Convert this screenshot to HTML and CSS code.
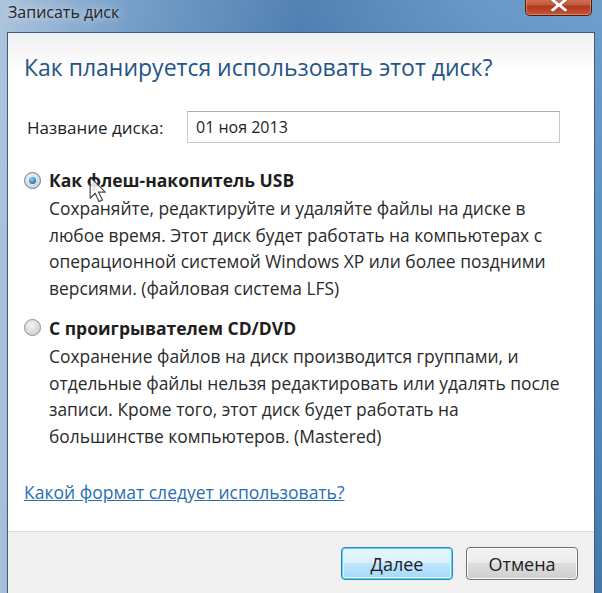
FILE: index.html
```html
<!DOCTYPE html>
<html lang="ru">
<head>
  <meta charset="UTF-8">
  <link rel="stylesheet" href="styles.css">
  <title>Записать диск</title>
</head>
<body>
  <div class="window">
    <div class="titlebar">
      <span class="caption">Записать диск</span>
      <div class="close">
        <svg width="22" height="14" viewBox="0 0 22 14">
          <path d="M5 0 L11 5 L17 0 L20 2 L14 7 L20 12 L17 14 L11 9 L5 14 L2 12 L8 7 L2 2 Z" fill="#fff" stroke="#7a2a1a" stroke-width="0.6"/>
        </svg>
      </div>
    </div>
    <div class="client">
      <div class="content">
        <h1 class="instruction">Как планируется использовать этот диск?</h1>
        <div class="field">
          <label class="field-label" for="disk-name">Название диска:</label>
          <input class="field-input" id="disk-name" type="text" value="01 ноя 2013">
        </div>
        <div class="option">
          <div class="option-head">
            <span class="radio checked"></span>
            <span class="option-title">Как флеш-накопитель USB</span>
          </div>
          <p class="option-text">Сохраняйте, редактируйте и удаляйте файлы на диске в<br>любое время. Этот диск будет работать на компьютерах с<br>операционной системой Windows XP или более поздними<br>версиями. (файловая система LFS)</p>
        </div>
        <div class="option">
          <div class="option-head">
            <span class="radio"></span>
            <span class="option-title">С проигрывателем CD/DVD</span>
          </div>
          <p class="option-text">Сохранение файлов на диск производится группами, и<br>отдельные файлы нельзя редактировать или удалять после<br>записи. Кроме того, этот диск будет работать на<br>большинстве компьютеров. (Mastered)</p>
        </div>
        <a class="help" href="#">Какой формат следует использовать?</a>
      </div>
      <div class="footer">
        <button class="btn default">Далее</button>
        <button class="btn">Отмена</button>
      </div>
    </div>
    <svg class="cursor" width="18" height="29" viewBox="0 0 16 26">
      <path d="M1 1 L1 20 L5.5 15.5 L9 23 L12 21.5 L8.5 14.5 L14.5 14.5 Z" fill="#fff" stroke="#333" stroke-width="1.1" stroke-linejoin="round"/>
    </svg>
  </div>
</body>
</html>
```

FILE: styles.css
```css
body {
  margin: 0;
  font-family: "Open Sans", "Noto Sans", sans-serif;
}

.window {
  position: relative;
  width: 602px;
  height: 593px;
  box-sizing: border-box;
  display: flex;
  flex-direction: column;
  padding: 0 7px 0 7px;
  background:
    linear-gradient(90deg, rgba(175, 198, 222, 0.95) 0%, rgba(125, 162, 200, 0.5) 22%, rgba(30, 80, 140, 0.35) 50%, rgba(90, 140, 195, 0.2) 80%, rgba(110, 160, 205, 0.5) 100%),
    linear-gradient(180deg, #6f9cc8 0%, #4e85bd 40%, #2f6aa5 80%, #1d4f85 100%);
}

.titlebar {
  position: relative;
  height: 32px;
  flex: none;
}

.caption {
  position: absolute;
  left: 1px;
  top: 1px;
  font-size: 16px;
  color: #262626;
  text-shadow: 0 0 8px rgba(255, 255, 255, 0.8);
}

.close {
  position: absolute;
  right: 3px;
  top: -4px;
  width: 67px;
  height: 20px;
  border: 1px solid #4a1c12;
  border-top: none;
  border-radius: 0 0 5px 5px;
  background: linear-gradient(180deg, #d9826a 0%, #c45a3c 45%, #b0391c 55%, #c8553a 100%);
  display: flex;
  align-items: flex-end;
  justify-content: center;
  padding-bottom: 3px;
  box-sizing: border-box;
  box-shadow: inset 0 0 0 1px rgba(255, 200, 180, 0.4);
}

.client {
  flex: 1;
  display: flex;
  flex-direction: column;
  background: #fff;
  border: 1px solid #3d5a78;
  border-bottom: none;
  min-height: 0;
}

.content {
  flex: 1;
  padding: 18px 16px 0 16px;
  background: linear-gradient(180deg, #efefef 0px, #fff 40px);
}

.instruction {
  margin: 0;
  font-size: 23px;
  font-weight: normal;
  color: #245587;
  line-height: 32px;
}

.field {
  display: flex;
  align-items: center;
  margin-top: 28px;
  padding-left: 3px;
}

.field-label {
  width: 160px;
  font-size: 17px;
  color: #1e1e1e;
}

.field-input {
  width: 373px;
  height: 32px;
  box-sizing: border-box;
  border: 1px solid #c6c9cd;
  border-top-color: #abadb3;
  padding: 0 8px;
  font-family: "Open Sans", "Noto Sans", sans-serif;
  font-size: 16px;
  color: #1e1e1e;
}

.option {
  margin-top: 25px;
  padding-left: 0;
}

.option + .option {
  margin-top: 14px;
}

.option-head {
  display: flex;
  align-items: center;
  gap: 8px;
}

.radio {
  width: 17px;
  height: 17px;
  border-radius: 50%;
  border: 1px solid #8e8f8f;
  background: radial-gradient(circle at 40% 35%, #f4f4f4 0%, #d4d4d4 70%, #c0c0c0 100%);
  box-sizing: border-box;
  position: relative;
}

.radio.checked {
  border-color: #5586a3;
}

.radio.checked::after {
  content: "";
  position: absolute;
  left: 4px;
  top: 4px;
  width: 7px;
  height: 7px;
  border-radius: 50%;
  background: radial-gradient(circle at 40% 35%, #8fd3f5 0%, #2a86c6 60%, #125e98 100%);
}

.option-title {
  font-size: 17.5px;
  font-weight: bold;
  color: #1e1e1e;
}

.option-text {
  margin: 3px 0 0 25px;
  font-size: 17.4px;
  line-height: 26.7px;
  color: #2a2a2a;
}

.help {
  display: inline-block;
  margin-top: 30px;
  font-size: 17.5px;
  color: #2a6db0;
}

.footer {
  flex: none;
  height: 62px;
  box-sizing: border-box;
  border-top: 1px solid #dcdcdc;
  background: #f0f0f0;
  display: flex;
  justify-content: flex-end;
  align-items: flex-start;
  gap: 13px;
  padding: 15px 16px 0 0;
}

.btn {
  width: 112px;
  height: 33px;
  border: 1px solid #707070;
  border-radius: 4px;
  background: linear-gradient(180deg, #f2f2f2 0%, #ebebeb 49%, #dddddd 50%, #cfcfcf 100%);
  font-family: "Open Sans", "Noto Sans", sans-serif;
  font-size: 18px;
  color: #1e1e1e;
  box-shadow: inset 0 0 0 1px #fbfbfb;
}

.btn.default {
  border-color: #3c7fb1;
  box-shadow: inset 0 0 0 1px #48d8fb, inset 0 0 0 2px #dff4fd;
  background: linear-gradient(180deg, #eaf6fd 0%, #d9f0fc 49%, #bee6fd 50%, #a7d9f5 100%);
}

.cursor {
  position: absolute;
  left: 89px;
  top: 176px;
  opacity: 0.85;
}
```
